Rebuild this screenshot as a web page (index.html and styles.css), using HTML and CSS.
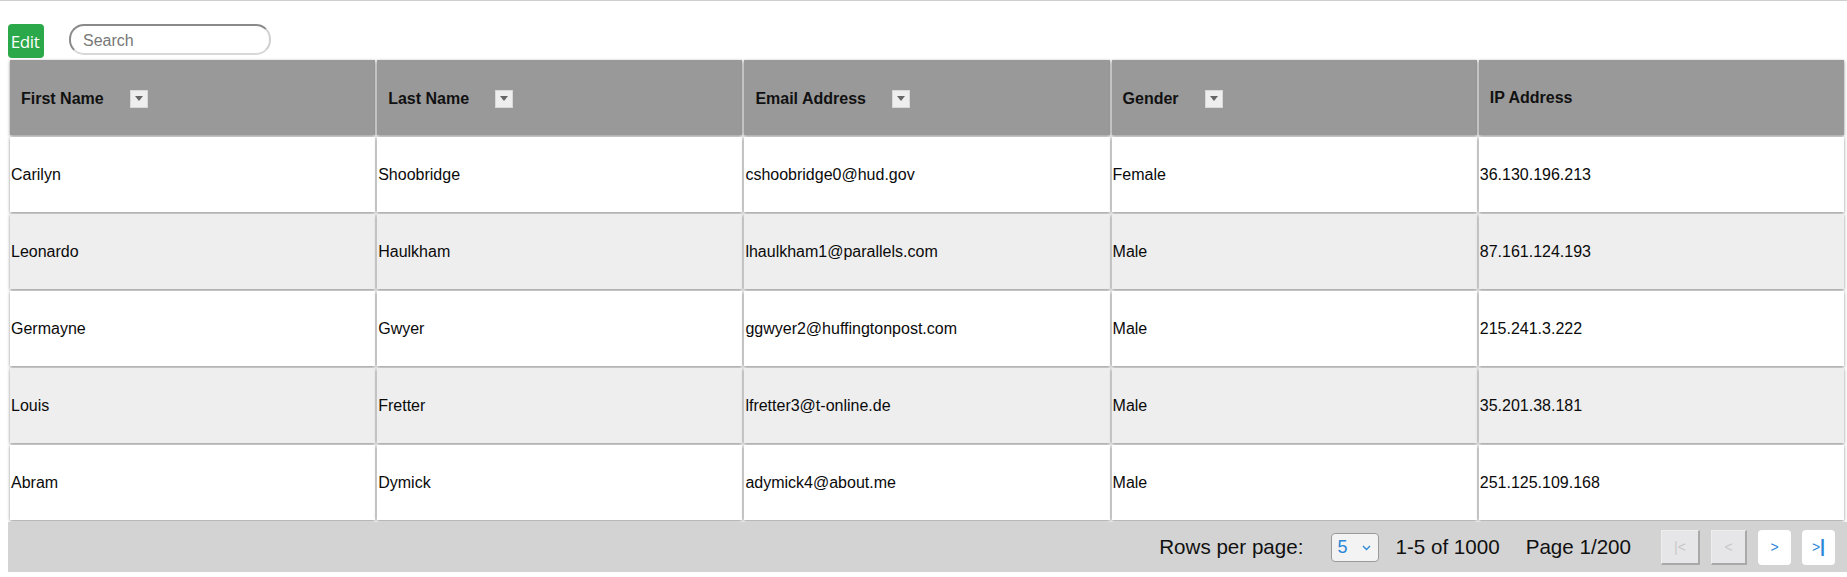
FILE: index.html
```html
<!DOCTYPE html>
<html>
<head>
<meta charset="utf-8">
<link rel="stylesheet" href="styles.css">
</head>
<body>
<div class="page">
  <div class="toolbar">
    <button class="edit-btn">Edit</button>
    <input class="search" type="text" placeholder="Search">
  </div>
  <table class="grid">
    <thead>
      <tr>
        <th><span class="th-in">First Name<span class="filter"><svg width="8" height="5" viewBox="0 0 8 5"><path d="M0 0h8L4 5z" fill="#666"/></svg></span></span></th>
        <th><span class="th-in">Last Name<span class="filter"><svg width="8" height="5" viewBox="0 0 8 5"><path d="M0 0h8L4 5z" fill="#666"/></svg></span></span></th>
        <th><span class="th-in">Email Address<span class="filter"><svg width="8" height="5" viewBox="0 0 8 5"><path d="M0 0h8L4 5z" fill="#666"/></svg></span></span></th>
        <th><span class="th-in">Gender<span class="filter"><svg width="8" height="5" viewBox="0 0 8 5"><path d="M0 0h8L4 5z" fill="#666"/></svg></span></span></th>
        <th class="th-ip"><span class="th-in">IP Address</span></th>
      </tr>
    </thead>
    <tbody>
      <tr><td>Carilyn</td><td>Shoobridge</td><td>cshoobridge0@hud.gov</td><td>Female</td><td>36.130.196.213</td></tr>
      <tr class="alt"><td>Leonardo</td><td>Haulkham</td><td>lhaulkham1@parallels.com</td><td>Male</td><td>87.161.124.193</td></tr>
      <tr><td>Germayne</td><td>Gwyer</td><td>ggwyer2@huffingtonpost.com</td><td>Male</td><td>215.241.3.222</td></tr>
      <tr class="alt"><td>Louis</td><td>Fretter</td><td>lfretter3@t-online.de</td><td>Male</td><td>35.201.38.181</td></tr>
      <tr><td>Abram</td><td>Dymick</td><td>adymick4@about.me</td><td>Male</td><td>251.125.109.168</td></tr>
    </tbody>
  </table>
  <div class="footer">
    <span class="rpp">Rows per page:</span>
    <span class="select"><span class="sel-val">5</span><svg width="9" height="6" viewBox="0 0 9 6"><path d="M1 1l3.5 3.5L8 1" fill="none" stroke="#2b87d8" stroke-width="1.4"/></svg></span>
    <span class="range">1-5 of 1000</span>
    <span class="pageno">Page 1/200</span>
    <span class="pager">
      <button class="pg disabled wide">|&lt;</button>
      <button class="pg disabled">&lt;</button>
      <button class="pg">&gt;</button>
      <button class="pg">&gt;<span class="bar">|</span></button>
    </span>
  </div>
</div>
</body>
</html>
```
FILE: styles.css
```css
html, body {
  margin: 0;
  padding: 0;
  background: #fff;
}
body {
  border-top: 1px solid #cfcfcf;
  font-family: "Liberation Sans", Arial, sans-serif;
  color: #111;
  overflow: hidden;
}
.page {
  padding: 0 0 0 8px;
}
.toolbar {
  display: flex;
  align-items: flex-start;
  margin-top: 23px;
  height: 34px;
}
.edit-btn {
  width: 36px;
  height: 34px;
  padding: 0 2px 0 0;
  border: none;
  border-radius: 4px;
  background: #2ba84a;
  color: #fff;
  font-family: "Open Sans", sans-serif;
  font-size: 17px;
  letter-spacing: -0.4px;
}
.search {
  margin-left: 25px;
  width: 202px;
  height: 31px;
  box-sizing: border-box;
  border-radius: 15px;
  border-width: 2px;
  border-style: solid;
  border-color: #8a8a8a #cfcfcf #d8d8d8 #8a8a8a;
  padding: 2px 12px 0 12px;
  font-family: "Liberation Sans", Arial, sans-serif;
  font-size: 16px;
  outline: none;
}
.search::placeholder {
  color: #777;
}
.grid {
  width: 1838px;
  table-layout: fixed;
  border-collapse: separate;
  border-spacing: 2px;
  margin-left: 0;
  margin-top: 0;
}
.grid th, .grid td {
  height: 75px;
  box-sizing: border-box;
  box-shadow: 0 1px 3px rgba(0, 0, 0, 0.45);
  vertical-align: middle;
  text-align: left;
}
.grid th {
  background: #999;
  font-size: 16px;
  font-weight: bold;
  color: #111;
  padding: 0 0 0 11px;
}
.th-in {
  display: inline-flex;
  align-items: center;
  position: relative;
  top: 1px;
}
.th-ip .th-in {
  top: 0;
}
.filter {
  margin-left: 26px;
  width: 18px;
  height: 18px;
  box-sizing: border-box;
  background: #eeeeee;
  border: 1px solid #d8d8d8;
  display: inline-flex;
  align-items: center;
  justify-content: center;
}
.grid td {
  background: #fff;
  font-size: 16px;
  color: #0a0a0a;
  padding: 0 0 0 1px;
}
.grid tr.alt td {
  background: #eeeeee;
}
.footer {
  display: flex;
  align-items: center;
  justify-content: flex-end;
  height: 50px;
  background: #d3d3d3;
  padding-right: 12px;
  font-size: 20.6px;
  color: #111;
}
.select {
  margin-left: 28px;
  width: 48px;
  height: 29px;
  box-sizing: border-box;
  border: 1px solid #9a9a9a;
  border-radius: 4px;
  background: #f3f3f3;
  display: inline-flex;
  align-items: center;
  justify-content: space-between;
  padding: 0 7px 0 5px;
  margin-top: 1px;
}
.sel-val {
  color: #2b87d8;
  font-size: 18px;
}
.range {
  margin-left: 16px;
}
.pageno {
  margin-left: 26px;
}
.pager {
  display: flex;
  align-items: center;
  margin-left: 30px;
  gap: 11px;
}
.pg {
  width: 33px;
  height: 35px;
  padding: 0;
  border: none;
  border-radius: 4px;
  background: #fff;
  color: #2b87d8;
  font-family: "Liberation Sans", Arial, sans-serif;
  font-size: 14px;
  display: inline-flex;
  align-items: center;
  justify-content: center;
}
.pg.disabled {
  width: 36px;
  border-radius: 0;
  background: #e6e6e8;
  color: #c8c8c8;
  border-style: solid;
  border-width: 1px 2px 2px 1px;
  border-color: #eeeeee #a9a9a9 #a9a9a9 #eeeeee;
}
.pg.disabled.wide {
  width: 39px;
}
.bar {
  font-size: 18px;
  font-weight: bold;
  margin-left: 0;
  position: relative;
  top: -1px;
}
```
